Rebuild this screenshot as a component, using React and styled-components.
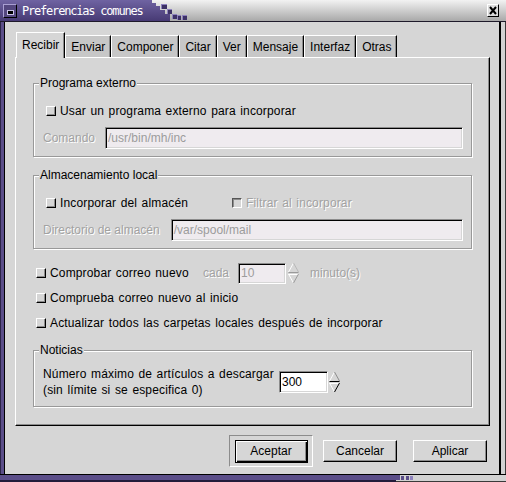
import React from 'react';
import styled, { createGlobalStyle } from 'styled-components';

const BG = '#d6d6d6';

const Global = createGlobalStyle`
  html, body { margin: 0; padding: 0; background: ${BG}; }
  body { font-family: "Liberation Sans", Arial, sans-serif; font-size: 12px; color: #000; }
  * { box-sizing: border-box; }
`;

const Win = styled.div`
  width: 506px;
  height: 482px;
  display: flex;
  flex-direction: column;
  background: ${BG};
  overflow: hidden;
`;

const TitleBar = styled.div`
  height: 22px;
  flex-shrink: 0;
  display: flex;
  align-items: stretch;
  background: linear-gradient(#f2f2f2, #a9a9a9);
  border-bottom: 1px solid #1e1a2a;
`;

const TitleLeft = styled.div`
  width: 148px;
  display: flex;
  align-items: center;
  background: linear-gradient(#6f63a2, #473a74);
  padding-left: 3px;
`;

const MinButton = styled.div`
  width: 14px;
  height: 14px;
  border-top: 1px solid #a99fd2;
  border-left: 1px solid #a99fd2;
  border-right: 1px solid #000;
  border-bottom: 1px solid #000;
  background: #54477f;
  display: flex;
  align-items: flex-end;
  justify-content: center;
  padding-bottom: 3px;
  padding-left: 1px;
`;

const MinDash = styled.span`
  width: 5px;
  height: 3px;
  background: #000;
  outline: 1px solid #c9c2e6;
`;

const TitleText = styled.span`
  margin-left: 5px;
  color: #fff;
  font-family: "DejaVu Sans Mono", "Liberation Mono", monospace;
  font-size: 12px;
  letter-spacing: -1.2px;
  white-space: nowrap;
`;

const Steps = styled.svg`
  width: 44px;
  height: 21px;
  flex-shrink: 0;
  display: block;
`;

const TitleRight = styled.div`
  flex: 1;
  display: flex;
  justify-content: flex-end;
  align-items: flex-start;
  padding: 4px 7px 0 0;
`;

const CloseButton = styled.div`
  width: 12px;
  height: 13px;
  background: #dcdcdc;
  border-top: 1px solid #fff;
  border-left: 1px solid #fff;
  border-right: 1px solid #000;
  border-bottom: 1px solid #000;
  display: flex;
  align-items: center;
  justify-content: center;
`;

const Body = styled.div`
  flex: 1;
  display: flex;
  min-height: 0;
`;

const LeftEdge = styled.div`
  width: 5px;
  flex-shrink: 0;
  background: linear-gradient(to right, #2c2447 0 1px, #5b4e89 1px 4px, #000 4px 5px);
`;

const RightEdge = styled.div`
  width: 7px;
  flex-shrink: 0;
  background: linear-gradient(to right, #000 0 2px, #d2d2d2 2px 6px, #3a3a3a 6px 7px);
`;

const BottomEdge = styled.div`
  height: 8px;
  flex-shrink: 0;
  display: flex;
  background: linear-gradient(#000 0 1px, #d2d2d2 1px 7px, #3a3a3a 7px 8px);
`;

const BottomPurple = styled.div`
  width: 396px;
  background: linear-gradient(#000 0 1px, #5b4e89 1px 6px, #221b3a 6px 8px);
`;

const BottomSteps = styled.svg`
  width: 18px;
  height: 8px;
  display: block;
`;

const Content = styled.div`
  flex: 1;
  display: flex;
  flex-direction: column;
  padding: 10px 9px 7px 10px;
`;

const TabRow = styled.div`
  height: 25px;
  display: flex;
  align-items: flex-end;
  padding-left: 1px;
  flex-shrink: 0;
`;

const Tab = styled.div`
  height: ${p => (p.$active ? '26px' : '22px')};
  margin-bottom: ${p => (p.$active ? '-1px' : '0')};
  padding: ${p => (p.$active ? '0 5px 1px' : '0 5px')};
  background: ${p => (p.$active ? BG : '#c7c7c7')};
  border-top: 1px solid #fff;
  border-left: 1px solid #fff;
  border-right: 1px solid #000;
  box-shadow: inset -1px 0 0 #8c8c8c;
  display: flex;
  align-items: center;
  position: relative;
  z-index: ${p => (p.$active ? 1 : 0)};
  white-space: nowrap;
`;

const Panel = styled.div`
  flex: 1;
  display: flex;
  flex-direction: column;
  border-top: 1px solid #fff;
  border-left: 1px solid #fff;
  border-right: 1px solid #000;
  border-bottom: 1px solid #000;
  box-shadow: inset -1px -1px 0 #8c8c8c;
  padding: 18px 17px 0 17px;
`;

const Group = styled.fieldset`
  margin: ${p => p.$top || 0}px 0 0 0;
  padding: ${p => p.$pt || 12}px 8px ${p => p.$pb || 7}px 9px;
  min-width: 0;
  border: 1px solid #999999;
  box-shadow: 1px 1px 0 #fff, inset 1px 1px 0 #fff;
  display: flex;
  flex-direction: column;
  gap: 7px;
`;

const Legend = styled.legend`
  padding: 0 1px;
  margin-left: -4px;
  line-height: 14px;
  font-size: 12px;
  background: ${BG};
`;

const Row = styled.div`
  display: flex;
  align-items: center;
  height: ${p => p.$h || 18}px;
  margin-top: ${p => p.$top || 0}px;
`;

const CheckItem = styled.label`
  display: flex;
  align-items: center;
  gap: 4px;
  padding-left: 3px;
  width: ${p => (p.$w ? `${p.$w}px` : 'auto')};
  flex-shrink: 0;
  white-space: nowrap;
  letter-spacing: 0.15px;
  word-spacing: 1px;
  color: ${p => (p.$disabled ? '#a2a2a2' : '#000')};
  text-shadow: ${p => (p.$disabled ? '1px 1px 0 #fff' : 'none')};
`;

const Check = styled.span`
  width: 10px;
  height: 10px;
  flex-shrink: 0;
  background: ${BG};
  border-top: 1px solid ${p => (p.$sunken ? '#555' : '#fff')};
  border-left: 1px solid ${p => (p.$sunken ? '#555' : '#fff')};
  border-right: 1px solid ${p => (p.$sunken ? '#fff' : '#000')};
  border-bottom: 1px solid ${p => (p.$sunken ? '#fff' : '#000')};
  box-shadow: ${p => (p.$sunken ? 'inset 1px 1px 0 #8c8c8c' : 'inset -1px -1px 0 #8c8c8c')};
`;

const DimText = styled.span`
  color: #a2a2a2;
  text-shadow: 1px 1px 0 #fff;
  white-space: nowrap;
  margin-right: ${p => p.$mr || 0}px;
  margin-left: ${p => p.$ml || 0}px;
  flex-shrink: 0;
`;

const Entry = styled.div`
  height: ${p => p.$h || 22}px;
  flex: ${p => (p.$w ? '0 0 auto' : '1')};
  width: ${p => (p.$w ? `${p.$w}px` : 'auto')};
  border-top: 1px solid #8c8c8c;
  border-left: 1px solid #8c8c8c;
  border-bottom: 1px solid #fff;
  border-right: 1px solid #fff;
  box-shadow: inset 1px 1px 0 #000, inset -1px -1px 0 ${BG};
  background: ${p => (p.$disabled ? '#efebef' : '#fff')};
  color: ${p => (p.$disabled ? '#9c9c9c' : '#000')};
  padding: 0 2px 0 2px;
  display: flex;
  align-items: center;
  white-space: nowrap;
  overflow: hidden;
`;

const SpinSvg = styled.svg`
  width: 11px;
  height: 22px;
  margin-left: ${p => p.$ml || 1}px;
  display: block;
  flex-shrink: 0;
`;

const NewsLabel = styled.div`
  width: 236px;
  line-height: 16px;
  flex-shrink: 0;
  letter-spacing: 0.15px;
  word-spacing: 1px;
`;

const ButtonRow = styled.div`
  height: 32px;
  margin-top: 9px;
  display: flex;
  align-items: center;
  justify-content: flex-end;
  padding-right: 3px;
  flex-shrink: 0;
`;

const DefaultFrame = styled.div`
  width: 84px;
  height: 32px;
  border-top: 1px solid #8c8c8c;
  border-left: 1px solid #8c8c8c;
  border-right: 1px solid #fff;
  border-bottom: 1px solid #fff;
  display: flex;
  align-items: center;
  justify-content: center;
`;

const Btn = styled.button`
  width: ${p => (p.$default ? 73 : 74)}px;
  height: ${p => (p.$default ? 23 : 22)}px;
  margin: 0 0 0 ${p => p.$ml || 0}px;
  padding: 0;
  font-family: "Liberation Sans", Arial, sans-serif;
  font-size: 12px;
  color: #000;
  background: ${BG};
  border-top: 1px solid ${p => (p.$default ? '#000' : '#fff')};
  border-left: 1px solid ${p => (p.$default ? '#000' : '#fff')};
  border-right: 1px solid #000;
  border-bottom: 1px solid #000;
  box-shadow: ${p =>
    p.$default
      ? 'inset 1px 1px 0 #fff, inset -1px -1px 0 #000, inset -2px -2px 0 #8c8c8c'
      : 'inset -1px -1px 0 #8c8c8c'};
`;

function Spin({ disabled, ml }) {
  const dark = disabled ? '#9a9a9a' : '#000';
  const mid = disabled ? '#b8b8b8' : '#8c8c8c';
  return (
    <SpinSvg $ml={ml} viewBox="0 0 11 22">
      <polygon points="0.5,10 5.5,1 10.5,10" fill={BG} />
      <line x1="0.5" y1="10" x2="5.5" y2="1" stroke="#fff" strokeWidth="1" />
      <line x1="5.5" y1="1" x2="10.5" y2="10" stroke={mid} strokeWidth="1" />
      <line x1="0.5" y1="10.5" x2="10.5" y2="10.5" stroke={dark} strokeWidth="1" />
      <polygon points="0.5,12 10.5,12 5.5,21" fill={BG} />
      <line x1="0.5" y1="12.5" x2="10.5" y2="12.5" stroke="#fff" strokeWidth="1" />
      <line x1="0.5" y1="12" x2="5.5" y2="21" stroke="#fff" strokeWidth="1" />
      <line x1="10.5" y1="12" x2="5.5" y2="21" stroke={dark} strokeWidth="1" />
    </SpinSvg>
  );
}

const tabs = ['Recibir', 'Enviar', 'Componer', 'Citar', 'Ver', 'Mensaje', 'Interfaz', 'Otras'];

const squares = [
  [13, 4, 6, 5],
  [19, 9, 5, 5],
  [24, 14, 5, 5],
  [29, 15, 4, 5],
  [34, 15, 5, 5],
];

export default function App() {
  return (
    <>
      <Global />
      <Win>
        <TitleBar>
          <TitleLeft>
            <MinButton>
              <MinDash />
            </MinButton>
            <TitleText>Preferencias comunes</TitleText>
          </TitleLeft>
          <Steps viewBox="0 0 44 21">
            <defs>
              <linearGradient id="pg" x1="0" y1="0" x2="0" y2="1">
                <stop offset="0" stopColor="#6f63a2" />
                <stop offset="1" stopColor="#473a74" />
              </linearGradient>
            </defs>
            <polygon
              points="0,0 4,0 4,3 8,3 8,6 12,6 12,10 17,10 17,14 22,14 22,21 0,21"
              fill="url(#pg)"
            />
            {squares.map(([x, y, w, h], i) => (
              <g key={i}>
                <rect x={x} y={y} width={w} height={h} fill="#3d3166" />
                <rect x={x} y={y} width={w} height="1" fill="#8e82bd" />
                <rect x={x} y={y} width="1" height={h} fill="#8e82bd" />
              </g>
            ))}
          </Steps>
          <TitleRight>
            <CloseButton>
              <svg width="8" height="9" viewBox="0 0 8 9">
                <path d="M1 1 L7 8 M7 1 L1 8" stroke="#000" strokeWidth="2" />
              </svg>
            </CloseButton>
          </TitleRight>
        </TitleBar>
        <Body>
          <LeftEdge />
          <Content>
            <TabRow>
              {tabs.map((t, i) => (
                <Tab key={t} $active={i === 0}>
                  {t}
                </Tab>
              ))}
            </TabRow>
            <Panel>
              <Group>
                <Legend>Programa externo</Legend>
                <Row>
                  <CheckItem>
                    <Check />
                    Usar un programa externo para incorporar
                  </CheckItem>
                </Row>
                <Row $h={22}>
                  <DimText $mr={10}>Comando</DimText>
                  <Entry $disabled>/usr/bin/mh/inc</Entry>
                </Row>
              </Group>
              <Group $top={11}>
                <Legend>Almacenamiento local</Legend>
                <Row>
                  <CheckItem $w={186}>
                    <Check />
                    Incorporar del almacén
                  </CheckItem>
                  <CheckItem $disabled>
                    <Check $sunken />
                    Filtrar al incorporar
                  </CheckItem>
                </Row>
                <Row $h={22}>
                  <DimText $mr={11}>Directorio de almacén</DimText>
                  <Entry $disabled>/var/spool/mail</Entry>
                </Row>
              </Group>
              <Row $h={22} $top={13}>
                <CheckItem $w={170}>
                  <Check />
                  Comprobar correo nuevo
                </CheckItem>
                <DimText $mr={9}>cada</DimText>
                <Entry $disabled $w={48} $h={21}>10</Entry>
                <Spin disabled ml={2} />
                <DimText $ml={11}>minuto(s)</DimText>
              </Row>
              <Row $h={22} $top={3}>
                <CheckItem>
                  <Check />
                  Comprueba correo nuevo al inicio
                </CheckItem>
              </Row>
              <Row $h={22} $top={3}>
                <CheckItem>
                  <Check />
                  Actualizar todos las carpetas locales después de incorporar
                </CheckItem>
              </Row>
              <Group $top={9} $pt={9} $pb={8}>
                <Legend>Noticias</Legend>
                <Row $h={32}>
                  <NewsLabel>
                    Número máximo de artículos a descargar
                    <br />
                    (sin límite si se especifica 0)
                  </NewsLabel>
                  <Entry $w={49}>300</Entry>
                  <Spin ml={1} />
                </Row>
              </Group>
            </Panel>
            <ButtonRow>
              <DefaultFrame>
                <Btn $default>Aceptar</Btn>
              </DefaultFrame>
              <Btn $ml={10}>Cancelar</Btn>
              <Btn $ml={16}>Aplicar</Btn>
            </ButtonRow>
          </Content>
          <RightEdge />
        </Body>
        <BottomEdge>
          <BottomPurple />
          <BottomSteps viewBox="0 0 18 8">
            <rect x="0" y="1" width="4" height="5" fill="#5b4e89" />
            <rect x="5" y="2" width="3" height="4" fill="#5b4e89" />
            <rect x="10" y="2" width="3" height="4" fill="#5b4e89" />
            <rect x="14" y="2" width="3" height="4" fill="#8e82bd" />
          </BottomSteps>
        </BottomEdge>
      </Win>
    </>
  );
}
